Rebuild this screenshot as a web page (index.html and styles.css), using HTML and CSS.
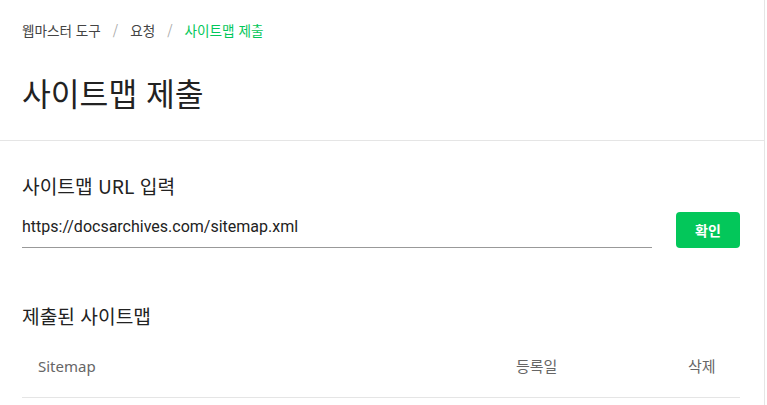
FILE: index.html
```html
<!DOCTYPE html>
<html lang="ko">
<head>
<meta charset="utf-8">
<link rel="stylesheet" href="styles.css">
</head>
<body>
<div class="page">
  <header class="head">
    <nav class="crumbs">
      <span class="crumb">웹마스터 도구</span>
      <span class="sep">/</span>
      <span class="crumb">요청</span>
      <span class="sep">/</span>
      <span class="crumb current">사이트맵 제출</span>
    </nav>
    <h1 class="title">사이트맵 제출</h1>
  </header>
  <section class="sec">
    <h2 class="sec-title">사이트맵 URL 입력</h2>
    <div class="form-row">
      <div class="field">https://docsarchives.com/sitemap.xml</div>
      <button class="btn">확인</button>
    </div>
  </section>
  <section class="sec sec2">
    <h2 class="sec-title">제출된 사이트맵</h2>
    <div class="thead">
      <span class="th th-map">Sitemap</span>
      <span class="th th-date">등록일</span>
      <span class="th th-del">삭제</span>
    </div>
  </section>
</div>
</body>
</html>
```
FILE: styles.css
```css
html, body {
  margin: 0;
  padding: 0;
  background: #fff;
}
body {
  font-family: "Noto Sans CJK KR", "Noto Sans", sans-serif;
  color: #222;
}
.page {
  width: 764px;
  border-right: 1px solid #e5e5e5;
  min-height: 405px;
  box-sizing: content-box;
}
.head {
  padding: 20px 22px 0;
  height: 120px;
  border-bottom: 1px solid #e5e5e5;
}
.crumbs {
  display: flex;
  align-items: center;
  gap: 12px;
  font-size: 13.6px;
  line-height: 20px;
  color: #444;
}
.sep {
  color: #aaa;
}
.current {
  color: #03c75a;
}
.title {
  margin: 31px 0 0;
  font-size: 31.3px;
  font-weight: 400;
  line-height: 44px;
  color: #222;
}
.sec {
  padding: 30px 24px 0 22px;
}
.sec-title {
  margin: 0;
  font-size: 19.2px;
  font-weight: 400;
  line-height: 30px;
  color: #222;
}
.form-row {
  display: flex;
  align-items: flex-end;
  gap: 24px;
  margin-top: 10px;
}
.field {
  flex: 1;
  font-family: Roboto, "Noto Sans CJK KR", sans-serif;
  font-size: 16px;
  line-height: 24px;
  padding: 4px 0 8px;
  border-bottom: 1px solid #999;
  color: #222;
}
.btn {
  width: 64px;
  height: 36px;
  border: none;
  border-radius: 4px;
  background: #03c75a;
  color: #fff;
  font-family: "Noto Sans CJK KR", sans-serif;
  font-size: 14px;
  font-weight: 700;
  padding: 0;
}
.sec2 {
  padding-top: 53px;
}
.thead {
  display: flex;
  align-items: center;
  height: 63px;
  margin-top: 3px;
  border-bottom: 1px solid #e5e5e5;
  font-size: 15px;
  color: #666;
  white-space: nowrap;
}
.th-map {
  flex: 1;
  padding-left: 16px;
  font-family: "Noto Sans", "Noto Sans CJK KR", sans-serif;
}
.th-date {
  width: 172px;
}
.th-del {
  width: 52px;
}
```
